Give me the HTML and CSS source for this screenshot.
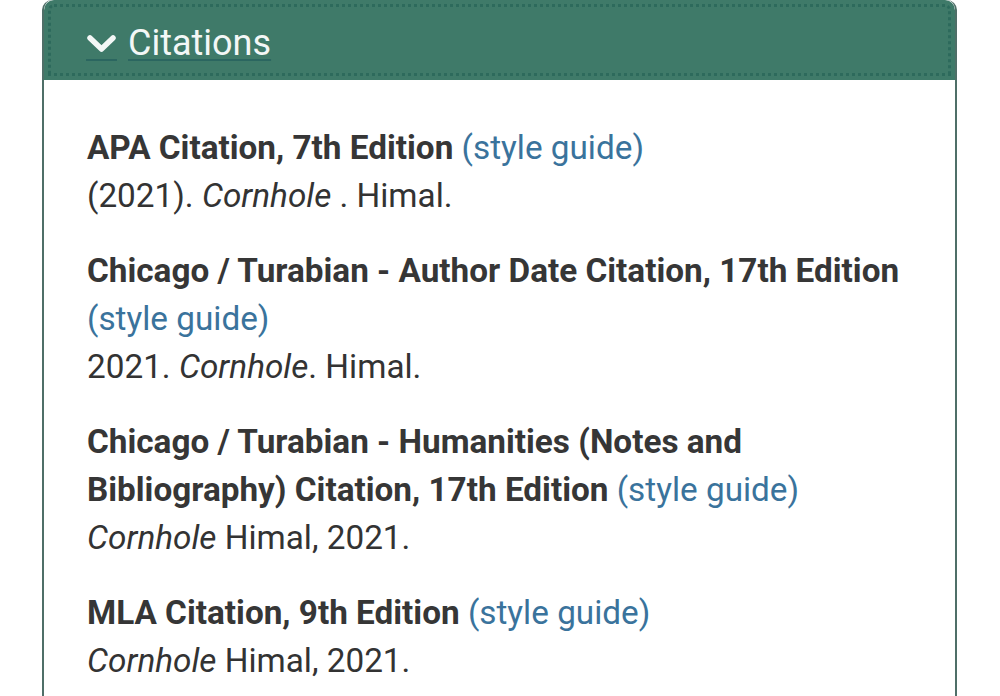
FILE: index.html
```html
<!DOCTYPE html>
<html lang="en">
<head>
<meta charset="utf-8">
<title>Citations</title>
<link rel="stylesheet" href="styles.css">
</head>
<body>
<div class="page">
  <section class="panel">
    <div class="panel-heading">
      <a class="toggle" href="#">
        <span class="chev"><svg width="29" height="18" viewBox="0 0 29 18"><path d="M3 3 L14.5 14 L26 3" fill="none" stroke="#f3f7f6" stroke-width="5.5" stroke-linecap="round" stroke-linejoin="round"/></svg></span>
        <span class="title">Citations</span>
      </a>
    </div>
    <div class="panel-body">
      <div class="cite">
        <div><strong>APA Citation, 7th Edition</strong> <a href="#">(style guide)</a></div>
        <div>(2021). <em>Cornhole </em>. Himal.</div>
      </div>
      <div class="cite">
        <div><strong>Chicago / Turabian - Author Date Citation, 17th Edition</strong> <a href="#">(style guide)</a></div>
        <div>2021. <em>Cornhole</em>. Himal.</div>
      </div>
      <div class="cite">
        <div><strong>Chicago / Turabian - Humanities (Notes and Bibliography) Citation, 17th Edition</strong> <a href="#">(style guide)</a></div>
        <div><em>Cornhole</em> Himal, 2021.</div>
      </div>
      <div class="cite">
        <div><strong>MLA Citation, 9th Edition</strong> <a href="#">(style guide)</a></div>
        <div><em>Cornhole</em> Himal, 2021.</div>
      </div>
    </div>
  </section>
</div>
</body>
</html>
```

FILE: styles.css
```css
html, body {
  margin: 0;
  padding: 0;
  background: #ffffff;
}
body {
  font-family: Roboto, "Liberation Sans", sans-serif;
  color: #333333;
}
.page {
  padding: 0 43px 0 42px;
}
.panel {
  border: 2px solid #4f6f68;
  border-top: none;
  border-radius: 10px 10px 0 0;
  overflow: hidden;
}
.panel-heading {
  background: #3f7a69;
  height: 80px;
  box-sizing: border-box;
  padding: 6px 0 0 42px;
  display: flex;
  align-items: center;
  outline: 3px dotted #2d6a5c;
  outline-offset: -7px;
  border-radius: 10px 10px 0 0;
}
.toggle {
  display: flex;
  align-items: flex-start;
  gap: 11px;
  text-decoration: none;
  color: #f3f7f6;
}
.chev {
  display: block;
  height: 39px;
  padding-top: 13px;
  box-sizing: border-box;
  width: 31px;
  border-bottom: 2px solid #2b6660;
}
.chev svg {
  display: block;
  margin-left: 1px;
}
.title {
  display: block;
  font-size: 36px;
  line-height: 42px;
  text-decoration: underline;
  text-decoration-color: #2b6660;
  text-decoration-thickness: 2px;
  text-underline-offset: 4px;
}
.panel-body {
  padding: 44px 43px 20px 43px;
}
.cite {
  font-size: 33.3px;
  line-height: 48px;
  margin-bottom: 27px;
}
.cite strong {
  font-weight: 700;
  color: #363636;
}
.cite a {
  color: #3a739c;
  text-decoration: none;
}
.cite em {
  font-style: italic;
}
```
